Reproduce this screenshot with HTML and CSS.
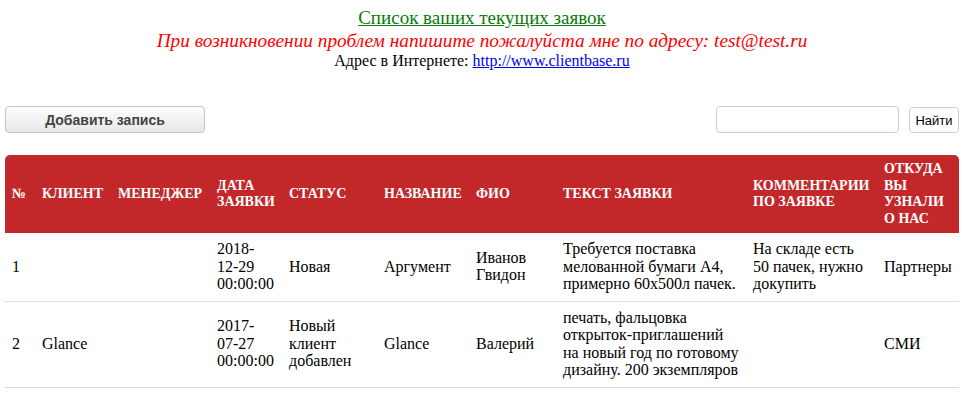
FILE: index.html
```html
<!DOCTYPE html>
<html>
<head>
	<title>Заявки</title>
	<link rel="stylesheet" href="styles.css">
</head>
<body>
	<div class="top">
		<a href="#" class="title">Список ваших текущих заявок</a>
		<div class="notice">При возникновении проблем напишите пожалуйста мне по адресу: test@test.ru</div>
		<div class="site">Адрес в Интернете: <a href="#">http://www.clientbase.ru</a></div>
	</div>
	<div class="toolbar">
		<button class="add">Добавить запись</button>
		<div class="search">
			<input type="text" class="query">
			<button class="find">Найти</button>
		</div>
	</div>
	<table class="orders">
		<colgroup>
			<col style="width:30px">
			<col style="width:76px">
			<col style="width:99px">
			<col style="width:72px">
			<col style="width:95px">
			<col style="width:92px">
			<col style="width:87px">
			<col style="width:190px">
			<col style="width:131px">
			<col style="width:82px">
		</colgroup>
		<thead>
			<tr>
				<th>№</th>
				<th>Клиент</th>
				<th>Менеджер</th>
				<th>Дата заявки</th>
				<th>Статус</th>
				<th>Название</th>
				<th>ФИО</th>
				<th>Текст заявки</th>
				<th>Комментарии по заявке</th>
				<th>Откуда вы узнали о нас</th>
			</tr>
		</thead>
		<tbody>
			<tr>
				<td>1</td>
				<td></td>
				<td></td>
				<td>2018-<br>12-29<br>00:00:00</td>
				<td>Новая</td>
				<td>Аргумент</td>
				<td>Иванов Гвидон</td>
				<td>Требуется поставка мелованной бумаги А4, примерно 60х500л пачек.</td>
				<td>На складе есть 50 пачек, нужно докупить</td>
				<td>Партнеры</td>
			</tr>
			<tr>
				<td>2</td>
				<td>Glance</td>
				<td></td>
				<td>2017-<br>07-27<br>00:00:00</td>
				<td>Новый клиент добавлен</td>
				<td>Glance</td>
				<td>Валерий</td>
				<td>печать, фальцовка открыток-приглашений на новый год по готовому дизайну. 200 экземпляров</td>
				<td></td>
				<td>СМИ</td>
			</tr>
		</tbody>
	</table>
</body>
</html>
```
FILE: styles.css
```css
body {
	margin: 0 9px 0 5px;
	font-family: "Liberation Serif", "Times New Roman", serif;
	color: #000;
	background: #fff;
}

.top {
	text-align: center;
	padding-top: 7px;
}

.title {
	color: #0a7a0a;
	font-size: 19px;
	line-height: 22px;
}

.notice {
	color: #ff0000;
	font-style: italic;
	font-size: 19.3px;
	line-height: 23px;
}

.site {
	font-size: 16px;
	line-height: 18px;
}

.site a {
	color: #0000ee;
}

.toolbar {
	display: flex;
	justify-content: space-between;
	align-items: flex-start;
	margin-top: 36px;
}

.add {
	width: 200px;
	height: 27px;
	border: 1px solid #c4c4c4;
	border-radius: 4px;
	background: linear-gradient(#fdfdfd, #e8e8e8);
	font-family: "Liberation Sans", Arial, sans-serif;
	font-weight: bold;
	font-size: 14px;
	color: #444;
	padding: 0;
}

.search {
	display: flex;
	gap: 10px;
	align-items: flex-start;
}

.query {
	box-sizing: border-box;
	width: 183px;
	height: 27px;
	border: 1px solid #ccc;
	border-radius: 4px;
	margin: 0;
}

.find {
	margin-top: 1px;
	width: 50px;
	height: 26px;
	border: 1px solid #ccc;
	border-radius: 4px;
	background: #fff;
	font-family: "Liberation Sans", Arial, sans-serif;
	font-size: 13px;
	color: #000;
	padding: 0;
}

.orders {
	margin-top: 22px;
	width: 954px;
	table-layout: fixed;
	border-collapse: separate;
	border-spacing: 0;
	font-size: 16px;
	line-height: 17.5px;
}

.orders th {
	background: #c2282a;
	color: #fff;
	text-transform: uppercase;
	text-align: left;
	font-size: 14px;
	line-height: 16.5px;
	padding: 6px 2px 6px 7px;
	height: 66px;
	vertical-align: middle;
}

.orders th:first-child {
	border-top-left-radius: 5px;
}

.orders th:last-child {
	border-top-right-radius: 5px;
}

.orders td {
	padding: 7px 7px 8px;
	border-bottom: 1px solid #ddd;
	vertical-align: middle;
}
```
